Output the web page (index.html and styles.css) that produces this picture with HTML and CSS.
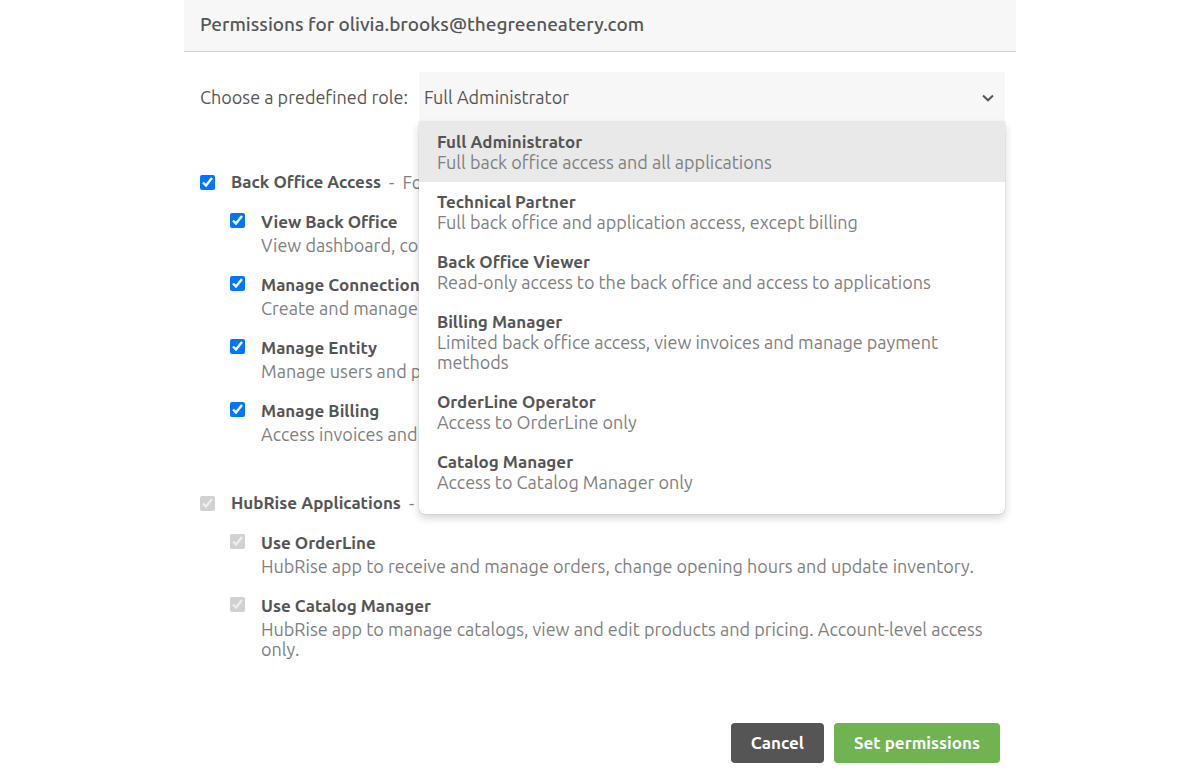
FILE: index.html
```
<!DOCTYPE html>
<html lang="en">
  <head>
    <meta charset="UTF-8" />
    <meta name="viewport" content="width=device-width, initial-scale=1.0" />
    <title>Permissions</title>
    <link rel="stylesheet" href="styles.css">
  </head>
  <body>
    <form class="modal">
      <header class="modal-header">
        <h1 class="modal-title">Permissions for olivia.brooks@thegreeneatery.com</h1>
      </header>

      <div class="modal-body">
        <div class="role">
          <label class="role-label" for="role">Choose a predefined role:</label>
          <div class="role-field">
            <select class="role-select" id="role">
              <option>Full Administrator</option>
              <option>Technical Partner</option>
              <option>Back Office Viewer</option>
              <option>Billing Manager</option>
              <option>OrderLine Operator</option>
              <option>Catalog Manager</option>
            </select>
            <svg class="role-arrow" width="12" height="8" viewBox="0 0 12 8" aria-hidden="true">
              <path d="M1 1.5 L6 6.3 L11 1.5" fill="none" stroke="currentColor" stroke-width="2" />
            </svg>
            <ul class="role-menu" id="roleMenu">
              <li><button type="button" class="role-option selected"><strong>Full Administrator</strong><span>Full back office access and all applications</span></button></li>
              <li><button type="button" class="role-option"><strong>Technical Partner</strong><span>Full back office and application access, except billing</span></button></li>
              <li><button type="button" class="role-option"><strong>Back Office Viewer</strong><span>Read-only access to the back office and access to applications</span></button></li>
              <li><button type="button" class="role-option"><strong>Billing Manager</strong><span>Limited back office access, view invoices and manage payment methods</span></button></li>
              <li><button type="button" class="role-option"><strong>OrderLine Operator</strong><span>Access to OrderLine only</span></button></li>
              <li><button type="button" class="role-option"><strong>Catalog Manager</strong><span>Access to Catalog Manager only</span></button></li>
            </ul>
          </div>
        </div>

        <section class="group">
          <div class="group-head">
            <input type="checkbox" class="check" id="backOffice" checked>
            <label class="name" for="backOffice">Back Office Access</label>
            <span class="group-note">-&nbsp; For</span>
          </div>
          <div class="permissions">
            <div class="permission">
              <input type="checkbox" class="check" id="viewBackOffice" checked>
              <div class="permission-text">
                <label class="name" for="viewBackOffice">View Back Office</label>
                <p class="description">View dashboard, con</p>
              </div>
            </div>
            <div class="permission">
              <input type="checkbox" class="check" id="manageConnections" checked>
              <div class="permission-text">
                <label class="name" for="manageConnections">Manage Connections</label>
                <p class="description">Create and manage</p>
              </div>
            </div>
            <div class="permission">
              <input type="checkbox" class="check" id="manageEntity" checked>
              <div class="permission-text">
                <label class="name" for="manageEntity">Manage Entity</label>
                <p class="description">Manage users and p</p>
              </div>
            </div>
            <div class="permission">
              <input type="checkbox" class="check" id="manageBilling" checked>
              <div class="permission-text">
                <label class="name" for="manageBilling">Manage Billing</label>
                <p class="description">Access invoices and</p>
              </div>
            </div>
          </div>
        </section>

        <section class="group">
          <div class="group-head">
            <input type="checkbox" class="check" id="applications" checked disabled>
            <label class="name" for="applications">HubRise Applications</label>
            <span class="group-note">-</span>
          </div>
          <div class="permissions">
            <div class="permission">
              <input type="checkbox" class="check" id="useOrderLine" checked disabled>
              <div class="permission-text">
                <label class="name" for="useOrderLine">Use OrderLine</label>
                <p class="description">HubRise app to receive and manage orders, change opening hours and update inventory.</p>
              </div>
            </div>
            <div class="permission">
              <input type="checkbox" class="check" id="useCatalogManager" checked disabled>
              <div class="permission-text">
                <label class="name" for="useCatalogManager">Use Catalog Manager</label>
                <p class="description">HubRise app to manage catalogs, view and edit products and pricing. Account-level access only.</p>
              </div>
            </div>
          </div>
        </section>
      </div>

      <footer class="modal-footer">
        <button type="button" class="btn btn-cancel">Cancel</button>
        <button type="submit" class="btn btn-submit">Set permissions</button>
      </footer>
    </form>

    <script>
      const role = document.getElementById("role");
      const menu = document.getElementById("roleMenu");
      const options = menu.querySelectorAll(".role-option");

      // open our own menu instead of the browser's list
      role.addEventListener("mousedown", (e) => {
        e.preventDefault();
        menu.hidden = !menu.hidden;
      });

      options.forEach((option, i) => {
        option.onclick = () => {
          menu.querySelector(".selected").classList.remove("selected");
          option.classList.add("selected");
          role.selectedIndex = i;
          menu.hidden = true;
        };
      });
    </script>
  </body>
</html>
```
FILE: styles.css
```
* {
  box-sizing: border-box;
}

body {
  margin: 0;
  background: #fff;
  color: #555;
  font-family: Ubuntu, "Noto Sans", sans-serif;
  font-size: 18px;
  line-height: 20px;
}

button,
select {
  font: inherit;
  color: inherit;
}

.modal {
  max-width: 832px;
  margin: 0 auto;
}

.modal-header {
  padding: 11px 16px 14px;
  background: #f7f7f7;
  border-bottom: 1px solid #d0d0d0;
}

.modal-title {
  margin: 0;
  font-size: 19px;
  font-weight: 500;
  line-height: 26px;
}

.modal-body {
  padding: 20px 11px 0 16px;
}

.role {
  display: flex;
  align-items: center;
  gap: 11px;
  margin-bottom: 47px;
}

.role-field {
  position: relative;
  flex: 1;
  display: flex;
}

.role-select {
  appearance: none;
  width: 100%;
  height: 50px;
  padding: 0 28px 0 5px;
  background: #f7f7f7;
  border: none;
  border-radius: 0;
  outline: none;
}

.role-arrow {
  position: absolute;
  top: 22px;
  right: 11px;
  pointer-events: none;
}

.role-menu {
  position: absolute;
  top: 100%;
  left: 0;
  right: 0;
  margin: 0;
  padding: 0 0 12px;
  list-style: none;
  background: #fff;
  border-radius: 0 0 6px 6px;
  box-shadow: 0 0 1px rgba(0, 0, 0, 0.4), 0 4px 8px rgba(0, 0, 0, 0.18);
}

.role-menu[hidden] {
  display: none;
}

.role-option {
  display: block;
  width: 100%;
  padding: 10px 18px;
  background: none;
  border: none;
  text-align: left;
  cursor: pointer;
}

.role-option.selected,
.role-option:hover {
  background: #e9e9e9;
}

.role-option strong,
.role-option span {
  display: block;
}

.role-option strong {
  font-size: 17px;
  font-weight: 600;
}

.role-option span {
  color: #808080;
}

.group {
  margin-bottom: 46px;
}

.group:last-child {
  margin-bottom: 0;
}

.group-head {
  display: flex;
  align-items: center;
}

.name {
  display: block;
  font-size: 17px;
  font-weight: 600;
  line-height: 26px;
}

.group-note {
  margin-left: 8px;
  color: #808080;
}

.check {
  flex: none;
  width: 15px;
  height: 15px;
  margin: 0 16px 0 0;
  accent-color: #0075ff;
}

.permissions {
  display: grid;
  gap: 17px;
  margin-top: 14px;
  padding-left: 30px;
}

.permission {
  display: flex;
  align-items: flex-start;
}

.permission .check {
  margin-top: 4px;
}

.description {
  margin: 0;
  color: #808080;
}

.modal-footer {
  display: flex;
  justify-content: flex-end;
  gap: 10px;
  padding: 64px 16px 10px;
}

.btn {
  height: 40px;
  padding: 0 20px;
  border: none;
  border-radius: 4px;
  color: #fff;
  font-size: 17px;
  font-weight: 600;
  cursor: pointer;
}

.btn-cancel {
  background: #555;
}

.btn-submit {
  background: #70b451;
}
```
